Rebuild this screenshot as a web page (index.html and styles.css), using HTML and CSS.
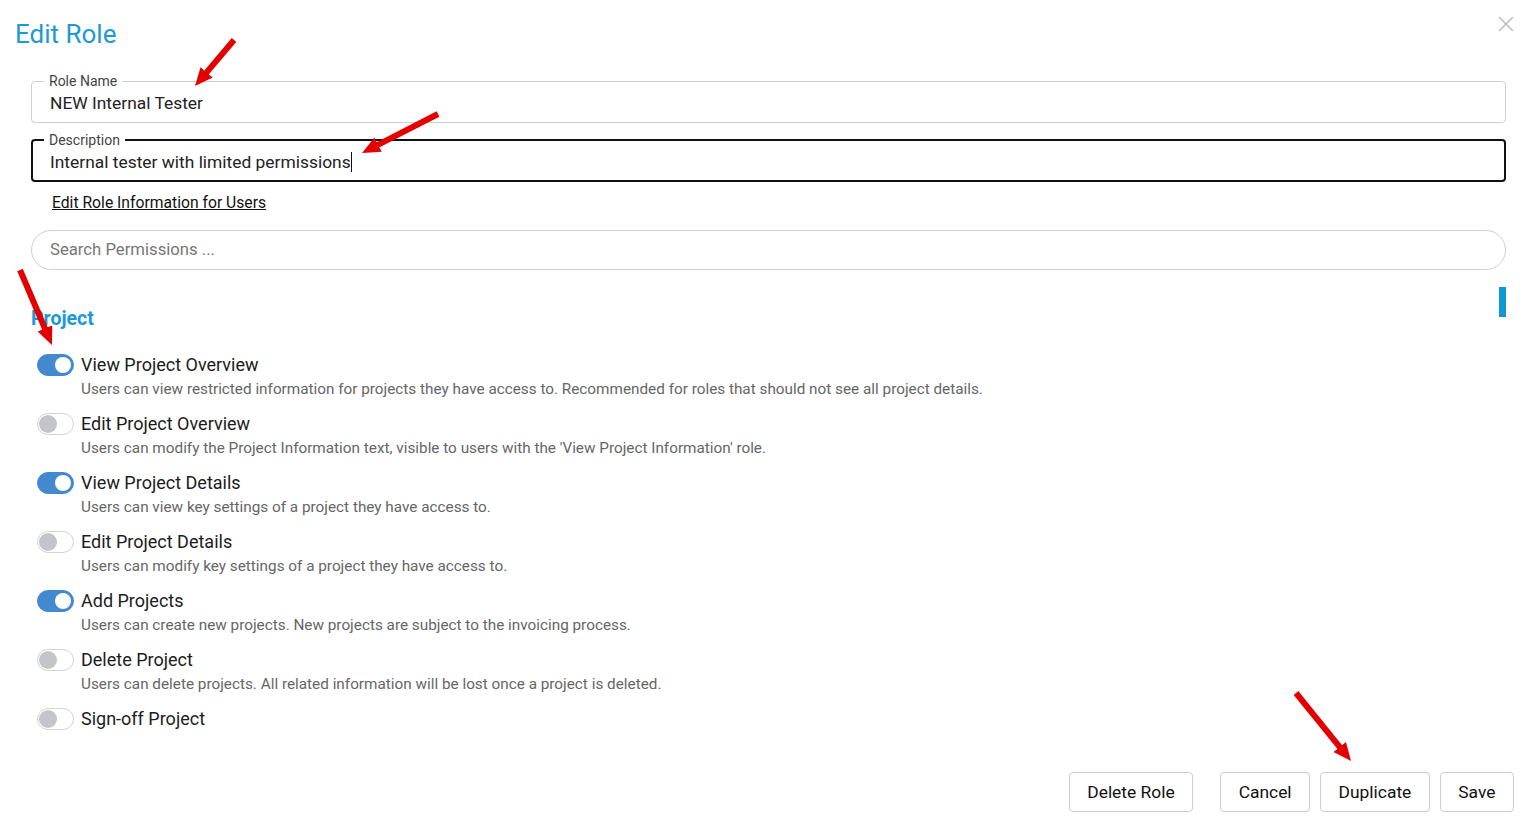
FILE: index.html
```html
<!DOCTYPE html>
<html lang="en">
<head>
    <meta charset="UTF-8">
    <meta name="viewport" content="width=device-width, initial-scale=1.0">
    <title>Edit Role</title>
    <link rel="stylesheet" href="styles.css">
</head>
<body>

<div class="dialog">
    <div class="dialog-header">
        <h1 class="dialog-title">Edit Role</h1>
        <span class="close" title="Close">
            <svg width="16" height="16" viewBox="0 0 16 16"><path d="M1 1 L15 15 M15 1 L1 15" stroke="#bdbdbd" stroke-width="1.6" fill="none"/></svg>
        </span>
    </div>

    <fieldset class="field">
        <legend>Role Name</legend>
        <div class="field-value">NEW Internal Tester</div>
    </fieldset>

    <fieldset class="field focused">
        <legend>Description</legend>
        <div class="field-value">Internal tester with limited permissions<span class="caret"></span></div>
    </fieldset>

    <a class="info-link" href="#">Edit Role Information for Users</a>

    <div class="search">Search Permissions ...</div>

    <div class="permissions">
        <div class="scroll-thumb"></div>
        <h2 class="section-title">Project</h2>

        <div class="perm">
            <span class="toggle on"></span>
            <div class="perm-text">
                <div class="perm-name">View Project Overview</div>
                <div class="perm-desc">Users can view restricted information for projects they have access to. Recommended for roles that should not see all project details.</div>
            </div>
        </div>
        <div class="perm">
            <span class="toggle"></span>
            <div class="perm-text">
                <div class="perm-name">Edit Project Overview</div>
                <div class="perm-desc">Users can modify the Project Information text, visible to users with the 'View Project Information' role.</div>
            </div>
        </div>
        <div class="perm">
            <span class="toggle on"></span>
            <div class="perm-text">
                <div class="perm-name">View Project Details</div>
                <div class="perm-desc">Users can view key settings of a project they have access to.</div>
            </div>
        </div>
        <div class="perm">
            <span class="toggle"></span>
            <div class="perm-text">
                <div class="perm-name">Edit Project Details</div>
                <div class="perm-desc">Users can modify key settings of a project they have access to.</div>
            </div>
        </div>
        <div class="perm">
            <span class="toggle on"></span>
            <div class="perm-text">
                <div class="perm-name">Add Projects</div>
                <div class="perm-desc">Users can create new projects. New projects are subject to the invoicing process.</div>
            </div>
        </div>
        <div class="perm">
            <span class="toggle"></span>
            <div class="perm-text">
                <div class="perm-name">Delete Project</div>
                <div class="perm-desc">Users can delete projects. All related information will be lost once a project is deleted.</div>
            </div>
        </div>
        <div class="perm">
            <span class="toggle"></span>
            <div class="perm-text">
                <div class="perm-name">Sign-off Project</div>
            </div>
        </div>
    </div>

    <div class="actions">
        <button class="btn delete">Delete Role</button>
        <button class="btn">Cancel</button>
        <button class="btn">Duplicate</button>
        <button class="btn">Save</button>
    </div>
</div>

<!-- annotation arrows over the screenshot -->
<svg class="arrows" width="1530" height="824">
    <defs>
        <marker id="head" markerUnits="userSpaceOnUse" markerWidth="20" markerHeight="18" refX="3" refY="8" orient="auto">
            <path d="M0 0 L18 8 L0 16 Z" fill="#e30000"/>
        </marker>
    </defs>
    <line x1="234" y1="40" x2="204.7" y2="74.6" marker-end="url(#head)"/>
    <line x1="438" y1="114" x2="375.4" y2="146.1" marker-end="url(#head)"/>
    <line x1="20" y1="270" x2="46.1" y2="331.2" marker-end="url(#head)"/>
    <line x1="1296" y1="693" x2="1341.6" y2="749.3" marker-end="url(#head)"/>
</svg>

</body>
</html>
```

FILE: styles.css
```css
body {
    font-family: Roboto, "Liberation Sans", Arial, sans-serif;
    margin: 0;
    padding: 0;
    background: #fff;
    color: #1c1c1c;
    width: 1530px;
    height: 824px;
    overflow: hidden;
    position: relative;
}

.dialog {
    padding-top: 18px;
}

.dialog-header {
    display: flex;
    justify-content: space-between;
    padding: 0 16px 0 15px;
    height: 32px;
}

.dialog-title {
    margin: 0;
    font-size: 26px;
    line-height: 32px;
    font-weight: 400;
    color: #1b9ad6;
}

.close {
    margin-top: -2px;
    cursor: pointer;
}

.field {
    margin: 23px 24px 0 31px;
    padding: 0 18px 5px;
    border: 1px solid #cfcfcf;
    border-radius: 4px;
    min-width: 0;
}

.field + .field {
    margin-top: 9px;
}

.field.focused {
    border: 2px solid #111;
    margin-left: 31px;
    padding-bottom: 4px;
    padding-left: 17px;
}

.field legend {
    padding: 0 5px;
    margin-left: -6px;
    font-size: 14px;
    line-height: 16px;
    color: #444;
}

.field-value {
    height: 28px;
    line-height: 28px;
    font-size: 17.4px;
    color: #222;
}

.caret {
    display: inline-block;
    width: 1px;
    height: 20px;
    background: #111;
    vertical-align: -4px;
}

.info-link {
    display: inline-block;
    margin: 11px 0 0 52px;
    font-size: 15.7px;
    line-height: 20px;
    color: #111;
    text-decoration: underline;
}

.search {
    margin: 17px 24px 0 31px;
    height: 38px;
    line-height: 37px;
    border: 1px solid #d0d0d0;
    border-radius: 20px;
    padding-left: 18px;
    font-size: 16.7px;
    color: #777;
}

.permissions {
    position: relative;
    margin: 17px 24px 0 31px;
    height: 444px;
    overflow: hidden;
    padding-top: 20px;
    box-sizing: border-box;
}

.scroll-thumb {
    position: absolute;
    top: 0;
    right: 0;
    width: 7px;
    height: 30px;
    background: #0f96d6;
}

.section-title {
    margin: 0 0 23px 0;
    font-size: 19.5px;
    line-height: 24px;
    font-weight: 700;
    color: #1b9ad6;
}

.perm {
    display: flex;
    gap: 7px;
    margin-bottom: 14px;
    padding-left: 6px;
}

.toggle {
    position: relative;
    flex: none;
    width: 35px;
    height: 20px;
    border: 1px solid #d4d4d4;
    border-radius: 11px;
    background: #fff;
}

.toggle::after {
    content: "";
    position: absolute;
    top: 1px;
    left: 1px;
    width: 18px;
    height: 18px;
    border-radius: 50%;
    background: #c3c5c8;
}

.toggle.on {
    background: #4389cf;
    border-color: #4389cf;
}

.toggle.on::after {
    top: 2px;
    left: auto;
    right: 2px;
    width: 16px;
    height: 16px;
    background: #fff;
}

.perm-name {
    font-size: 18px;
    line-height: 22px;
    color: #1c1c1c;
}

.perm-desc {
    margin-top: 3px;
    font-size: 15.3px;
    line-height: 20px;
    color: #666;
}

.actions {
    display: flex;
    justify-content: flex-end;
    gap: 10px;
    margin-top: 41px;
    padding-right: 16px;
}

.btn {
    height: 40px;
    padding: 0 17.5px;
    border: 1px solid #cdcdcd;
    border-radius: 4px;
    background: #fff;
    font-family: inherit;
    font-size: 17.4px;
    color: #111;
    cursor: pointer;
}

.btn.delete {
    margin-right: 17px;
}

.arrows {
    position: absolute;
    top: 0;
    left: 0;
    pointer-events: none;
}

.arrows line {
    stroke: #e30000;
    stroke-width: 6;
}
```
